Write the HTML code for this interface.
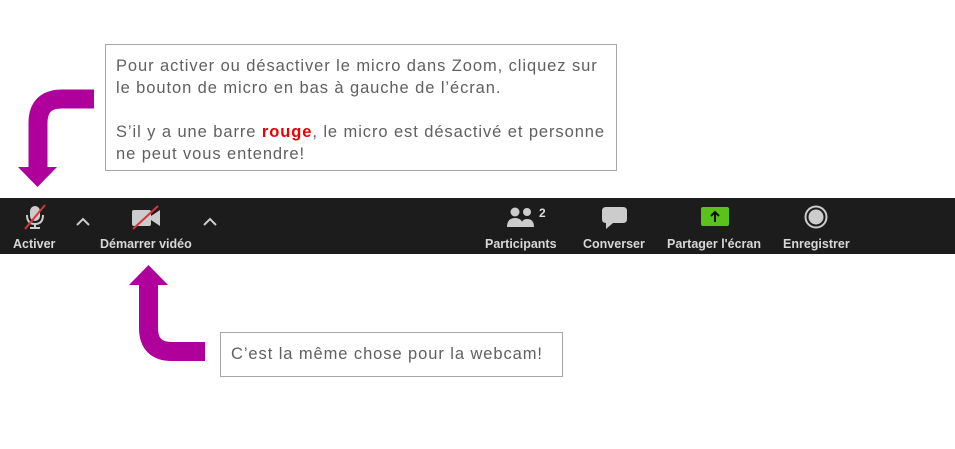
<!DOCTYPE html>
<html><head><meta charset="utf-8"><style>
body{margin:0;width:955px;height:449px;background:#fff;position:relative;overflow:hidden;font-family:"Liberation Sans",sans-serif}
.box{position:absolute;border:1px solid #a6a6a6;background:#fff;color:#606060;font-size:16.5px;letter-spacing:0.92px;line-height:22px;box-sizing:border-box;white-space:nowrap}
.bar{position:absolute;left:0;top:198px;width:955px;height:56px;background:#1c1c1c}
.lbl{position:absolute;top:237px;font-size:12.5px;font-weight:bold;color:#d8d8d8;letter-spacing:0px;white-space:nowrap}
svg{position:absolute}
</style></head><body>
<svg width="955" height="449" style="left:0;top:0">
<path d="M94 99 H62 Q38 99 38 123 V168" fill="none" stroke="#b0009c" stroke-width="19"/>
<polygon points="18,167 57,167 37.5,187" fill="#b0009c"/>
<path d="M148.5 284 V328 Q148.5 351.5 172 351.5 H205" fill="none" stroke="#b0009c" stroke-width="19"/>
<polygon points="129,285 168,285 148.5,265" fill="#b0009c"/>
</svg>
<div class="box" style="left:105px;top:44px;width:512px;height:127px;padding:10px 0 0 10px">Pour activer ou désactiver le micro dans Zoom, cliquez sur<br>le bouton de micro en bas à gauche de l’écran.<br><br>S’il y a une barre <b style="color:#ee0000">rouge</b>, le micro est désactivé et personne<br>ne peut vous entendre!</div>
<div class="box" style="left:220px;top:332px;width:343px;height:45px;padding:10px 0 0 10px">C’est la même chose pour la webcam!</div>
<div class="bar"></div>
<svg width="955" height="60" style="left:0;top:198px">
<rect x="30" y="8" width="10" height="15" rx="5" fill="#ccc"/>
<path d="M27 17 Q27 26 35 26 Q43 26 43 17" fill="none" stroke="#ccc" stroke-width="2"/>
<path d="M35 26 V29 M30 30 H40" stroke="#ccc" stroke-width="2"/>
<line x1="25" y1="31" x2="45" y2="7" stroke="#d9333a" stroke-width="2"/>
<path d="M77 27 L83 21 L89 27" fill="none" stroke="#ccc" stroke-width="2"/>
<rect x="132" y="12" width="19" height="16" rx="2" fill="#ccc"/>
<polygon points="151,18 160,12 160,28 151,22" fill="#ccc"/>
<line x1="133" y1="31" x2="158" y2="8" stroke="#d9333a" stroke-width="2"/>
<path d="M204 27 L210 21 L216 27" fill="none" stroke="#ccc" stroke-width="2"/>
<circle cx="515" cy="14" r="4.5" fill="#ccc"/><circle cx="527" cy="14" r="4" fill="#ccc"/>
<path d="M507 29 Q507 20 515 20 Q523 20 523 29Z M521 29 Q521 21 527 21 Q534 21 534 29Z" fill="#ccc"/>
<text x="539" y="19" font-size="12" font-weight="bold" fill="#ddd" font-family="Liberation Sans">2</text>
<path d="M606 9 H623 Q627 9 627 13 V21 Q627 25 623 25 H613 L606 31 V25 Q602 25 602 21 V13 Q602 9 606 9Z" fill="#ccc"/>
<rect x="701" y="9" width="28" height="19" rx="2" fill="#5ac21a"/>
<path d="M715 24 V14 M711 18 L715 14 L719 18" fill="none" stroke="#111" stroke-width="2"/>
<circle cx="816" cy="19" r="10.5" fill="none" stroke="#ccc" stroke-width="2"/>
<circle cx="816" cy="19" r="7.5" fill="#ccc"/>
</svg>
<div class="lbl" style="left:13px">Activer</div>
<div class="lbl" style="left:100px">Démarrer vidéo</div>
<div class="lbl" style="left:485px">Participants</div>
<div class="lbl" style="left:583px">Converser</div>
<div class="lbl" style="left:667px">Partager l'écran</div>
<div class="lbl" style="left:783px">Enregistrer</div>
</body></html>
